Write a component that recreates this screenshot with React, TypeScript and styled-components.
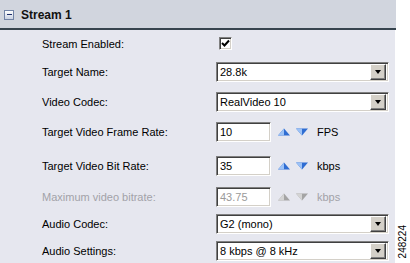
import React from "react";
import styled, { createGlobalStyle } from "styled-components";

const GlobalStyle = createGlobalStyle`
  html, body {
    margin: 0;
    padding: 0;
    background: #fff;
  }
  body {
    font-family: "Liberation Sans", Arial, sans-serif;
    font-size: 11px;
    color: #000;
  }
`;

const Page = styled.div`
  display: flex;
  width: 410px;
  height: 263px;
  overflow: hidden;
  background: #fff;
`;

const Panel = styled.div`
  width: 396px;
  display: flex;
  flex-direction: column;
`;

const Header = styled.div`
  height: 33px;
  box-sizing: border-box;
  background: #d1d5de;
  border-bottom: 2px solid #37444e;
  display: flex;
  align-items: center;
  padding: 1px 0 0 4px;
  gap: 7px;
`;

const Collapse = styled.div`
  width: 10px;
  height: 10px;
  box-sizing: border-box;
  border: 1px solid #7283a6;
  background: linear-gradient(#ffffff, #c9d1e2);
  display: flex;
  align-items: center;
  justify-content: center;

  &::after {
    content: "";
    width: 5px;
    height: 1px;
    background: #1f2f6a;
  }
`;

const Title = styled.span`
  font-weight: bold;
  font-size: 12px;
  color: #111;
`;

const Body = styled.div`
  flex: 1;
  background: #e6e7ef;
  margin-right: 1px;
  padding-top: 1px;
  display: flex;
  flex-direction: column;
`;

const Row = styled.div<{ $h: number }>`
  height: ${(p) => p.$h}px;
  display: flex;
  align-items: center;
  padding-left: 42px;
`;

const Label = styled.div<{ $disabled?: boolean }>`
  width: 174px;
  color: ${(p) => (p.$disabled ? "#a2a2a8" : "#000")};
  white-space: nowrap;
`;

const sunken = `
  box-sizing: border-box;
  border: 1px solid;
  border-color: #808080 #ffffff #ffffff #808080;
  box-shadow: inset 1px 1px #404040, inset -1px -1px #d4d0c8;
  background: #fff;
`;

const Check = styled.div`
  ${sunken}
  width: 13px;
  height: 13px;
  margin: 0 0 0 3px;
  display: flex;
  align-items: center;
  justify-content: center;
`;

const Select = styled.div`
  ${sunken}
  width: 173px;
  height: 20px;
  display: flex;
  align-items: center;
  padding: 2px;
`;

const Value = styled.div`
  flex: 1;
  padding-left: 1px;
  white-space: nowrap;
`;

const DropButton = styled.div`
  width: 16px;
  height: 16px;
  box-sizing: border-box;
  background: #d4d0c8;
  border: 1px solid;
  border-color: #ffffff #404040 #404040 #ffffff;
  box-shadow: inset -1px -1px #808080;
  display: flex;
  align-items: center;
  justify-content: center;

  &::after {
    content: "";
    border-left: 3.5px solid transparent;
    border-right: 3.5px solid transparent;
    border-top: 4px solid #000;
  }
`;

const Spinner = styled.div`
  display: flex;
  align-items: center;
`;

const NumInput = styled.div<{ $disabled?: boolean }>`
  ${sunken}
  width: 55px;
  height: 20px;
  padding: 0 3px;
  display: flex;
  align-items: center;
  color: ${(p) => (p.$disabled ? "#9a9a9a" : "#000")};
`;

const Arrows = styled.div`
  display: flex;
  gap: 6px;
  margin-left: 7px;
`;

const Unit = styled.span<{ $disabled?: boolean }>`
  margin-left: 9px;
  color: ${(p) => (p.$disabled ? "#a2a2a8" : "#000")};
`;

const Strip = styled.div`
  flex: 1;
  display: flex;
  align-items: flex-end;
  padding: 0 0 5px 2px;
`;

const FigNumber = styled.span`
  writing-mode: vertical-rl;
  transform: rotate(180deg);
  font-size: 10px;
  line-height: 1;
  color: #000;
`;

// shaded spinner arrow: solid triangle with a lighter left face
const Arrow = ({ down, disabled }: { down?: boolean; disabled?: boolean }) => {
  const light = disabled ? "#d4d4d4" : "#9cc2f6";
  const dark = disabled ? "#a4a4a4" : "#2f6dd2";
  return (
    <svg width="12" height="8" viewBox="0 0 12 8">
      {down ? (
        <g>
          <polygon points="0,0.5 12,0.5 6,7.5" fill={dark} />
          <polygon points="0,0.5 6,0.5 6,7.5" fill={light} />
        </g>
      ) : (
        <g>
          <polygon points="6,0.5 0,7.5 12,7.5" fill={dark} />
          <polygon points="6,0.5 0,7.5 6,7.5" fill={light} />
        </g>
      )}
    </svg>
  );
};

const Dropdown = ({ value }: { value: string }) => (
  <Select>
    <Value>{value}</Value>
    <DropButton />
  </Select>
);

const NumberField = ({
  value,
  unit,
  disabled,
}: {
  value: string;
  unit: string;
  disabled?: boolean;
}) => (
  <Spinner>
    <NumInput $disabled={disabled}>{value}</NumInput>
    <Arrows>
      <Arrow disabled={disabled} />
      <Arrow down disabled={disabled} />
    </Arrows>
    <Unit $disabled={disabled}>{unit}</Unit>
  </Spinner>
);

export default function App() {
  return (
    <Page>
      <GlobalStyle />
      <Panel>
        <Header>
          <Collapse />
          <Title>Stream 1</Title>
        </Header>
        <Body>
          <Row $h={25}>
            <Label>Stream Enabled:</Label>
            <Check>
              <svg width="9" height="9" viewBox="0 0 9 9">
                <polyline
                  points="1,4 3.5,6.5 8,1.5"
                  fill="none"
                  stroke="#000"
                  strokeWidth="2"
                />
              </svg>
            </Check>
          </Row>
          <Row $h={32}>
            <Label>Target Name:</Label>
            <Dropdown value="28.8k" />
          </Row>
          <Row $h={28}>
            <Label>Video Codec:</Label>
            <Dropdown value="RealVideo 10" />
          </Row>
          <Row $h={32}>
            <Label>Target Video Frame Rate:</Label>
            <NumberField value="10" unit="FPS" />
          </Row>
          <Row $h={36}>
            <Label>Target Video Bit Rate:</Label>
            <NumberField value="35" unit="kbps" />
          </Row>
          <Row $h={25}>
            <Label $disabled>Maximum video bitrate:</Label>
            <NumberField value="43.75" unit="kbps" disabled />
          </Row>
          <Row $h={30}>
            <Label>Audio Codec:</Label>
            <Dropdown value="G2 (mono)" />
          </Row>
          <Row $h={24}>
            <Label>Audio Settings:</Label>
            <Dropdown value="8 kbps @ 8 kHz" />
          </Row>
        </Body>
      </Panel>
      <Strip>
        <FigNumber>248224</FigNumber>
      </Strip>
    </Page>
  );
}
